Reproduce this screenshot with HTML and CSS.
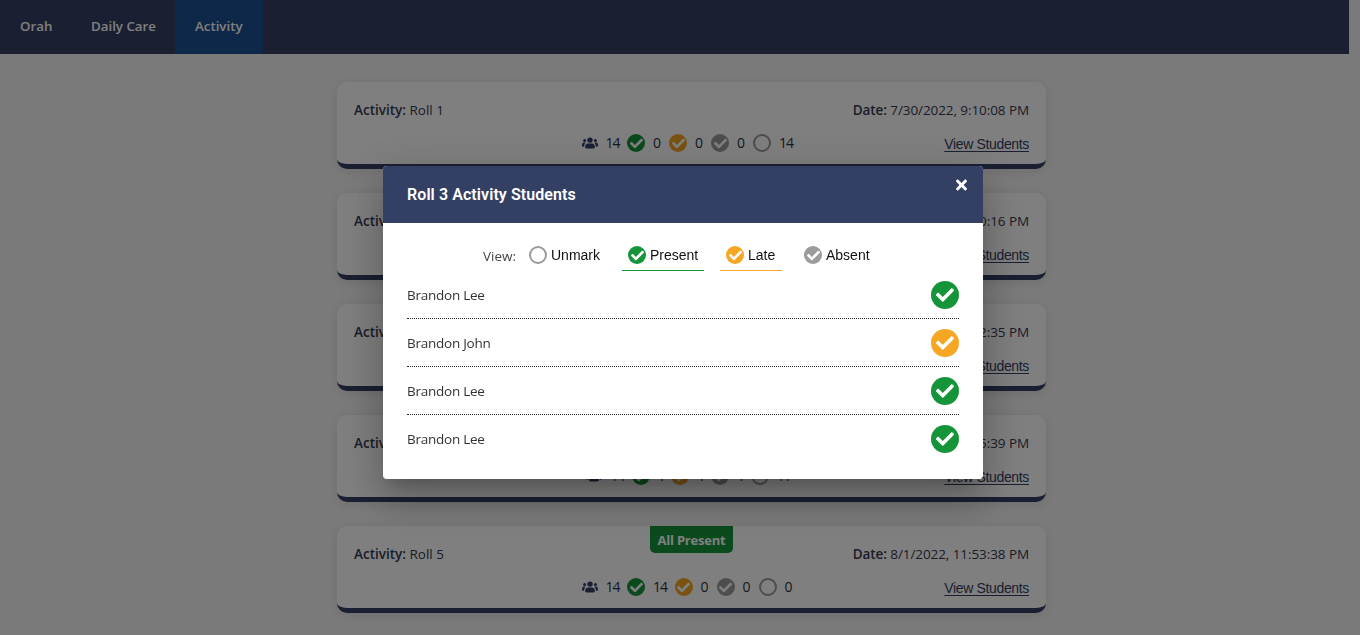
FILE: index.html
```
<!DOCTYPE html>
<html lang="en">
<head>
<meta charset="utf-8">
<title>Activity</title>
<link rel="stylesheet" href="styles.css">
</head>
<body>
<svg class="defs" aria-hidden="true">
  <symbol id="check" viewBox="0 0 512 512"><path d="M173.898 439.404l-166.4-166.4c-9.997-9.997-9.997-26.206 0-36.204l36.203-36.204c9.997-9.998 26.207-9.998 36.204 0L192 312.69 432.095 72.596c9.997-9.997 26.207-9.997 36.204 0l36.203 36.204c9.997 9.997 9.997 26.206 0 36.204l-294.4 294.401c-9.998 9.997-26.207 9.997-36.204-.001z"/></symbol>
  <symbol id="users" viewBox="0 0 16 12"><circle cx="8" cy="3.1" r="2.7"/><circle cx="2.6" cy="3.6" r="1.5"/><circle cx="13.4" cy="3.6" r="1.5"/><path d="M5.6 6.5h4.8c1.6.4 2.5 1.700 2.500 3.300 0 1-.6 1.600-1.500 1.600H4.600c-.9 0-1.500-.6-1.500-1.600 0-1.600.9-2.900 2.500-3.300z"/><path d="M1.500 5.600h2.300C2.700 6.500 2.200 7.800 2.100 9.700H1C.3 9.700 0 9.200 0 8.500c0-1.500.4-2.500 1.500-2.900zM14.500 5.600h-2.300c1.100.9 1.600 2.200 1.700 4.100H15c.7 0 1-.5 1-1.200 0-1.500-.4-2.500-1.500-2.900z"/></symbol>
  <symbol id="times" viewBox="0 0 352 512"><path d="M242.72 256l100.07-100.07c12.28-12.28 12.28-32.19 0-44.48l-22.24-22.24c-12.28-12.28-32.19-12.28-44.48 0L176 189.28 75.93 89.21c-12.28-12.28-32.19-12.28-44.48 0L9.21 111.45c-12.28 12.28-12.28 32.19 0 44.48L109.28 256 9.21 356.07c-12.28 12.28-12.28 32.19 0 44.48l22.24 22.24c12.28 12.28 32.2 12.28 44.48 0L176 322.72l100.07 100.07c12.28 12.28 32.2 12.28 44.48 0l22.24-22.24c12.28-12.28 12.28-32.19 0-44.48L242.72 256z"/></symbol>
</svg>

<nav class="nav">
  <a class="nav-link orah">Orah</a>
  <a class="nav-link care">Daily Care</a>
  <a class="nav-link active">Activity</a>
</nav>

<main class="list">
  <article class="card">
    <div class="row"><span class="activity"><b>Activity:</b> Roll 1</span><span class="date"><b>Date:</b> 7/30/2022, 9:10:08 PM</span></div>
    <div class="stats">
      <svg class="users"><use href="#users"/></svg><span class="n two">14</span>
      <i class="dot green"><svg><use href="#check"/></svg></i><span class="n">0</span>
      <i class="dot orange"><svg><use href="#check"/></svg></i><span class="n">0</span>
      <i class="dot grey"><svg><use href="#check"/></svg></i><span class="n">0</span>
      <i class="dot empty"></i><span class="n two">14</span>
    </div>
    <a class="view">View Students</a>
  </article>
  <article class="card">
    <div class="row"><span class="activity"><b>Activity:</b> Roll 2</span><span class="date"><b>Date:</b> 7/30/2022, 9:10:16 PM</span></div>
    <a class="view">View Students</a>
  </article>
  <article class="card">
    <div class="row"><span class="activity"><b>Activity:</b> Roll 3</span><span class="date"><b>Date:</b> 7/31/2022, 9:12:35 PM</span></div>
    <a class="view">View Students</a>
  </article>
  <article class="card">
    <div class="row"><span class="activity"><b>Activity:</b> Roll 4</span><span class="date"><b>Date:</b> 7/31/2022, 9:15:39 PM</span></div>
    <div class="stats">
      <svg class="users"><use href="#users"/></svg><span class="n two">14</span>
      <i class="dot green"><svg><use href="#check"/></svg></i><span class="n one">1</span>
      <i class="dot orange"><svg><use href="#check"/></svg></i><span class="n one">1</span>
      <i class="dot grey"><svg><use href="#check"/></svg></i><span class="n one">1</span>
      <i class="dot empty"></i><span class="n eleven">11</span>
    </div>
    <a class="view">View Students</a>
  </article>
  <article class="card">
    <span class="badge">All Present</span>
    <div class="row"><span class="activity"><b>Activity:</b> Roll 5</span><span class="date"><b>Date:</b> 8/1/2022, 11:53:38 PM</span></div>
    <div class="stats">
      <svg class="users"><use href="#users"/></svg><span class="n two">14</span>
      <i class="dot green"><svg><use href="#check"/></svg></i><span class="n two">14</span>
      <i class="dot orange"><svg><use href="#check"/></svg></i><span class="n">0</span>
      <i class="dot grey"><svg><use href="#check"/></svg></i><span class="n">0</span>
      <i class="dot empty"></i><span class="n">0</span>
    </div>
    <a class="view">View Students</a>
  </article>
</main>

<div class="backdrop">
  <section class="dialog" role="dialog">
    <header class="dialog-head">
      <h2>Roll 3 Activity Students</h2>
      <svg class="close"><use href="#times"/></svg>
    </header>
    <div class="filters">
      <span class="label">View:</span>
      <span class="filter unmark"><i class="dot empty"></i><span>Unmark</span></span>
      <span class="filter present"><i class="dot green"><svg><use href="#check"/></svg></i><span>Present</span></span>
      <span class="filter late"><i class="dot orange"><svg><use href="#check"/></svg></i><span>Late</span></span>
      <span class="filter absent"><i class="dot grey"><svg><use href="#check"/></svg></i><span>Absent</span></span>
    </div>
    <ul class="students">
      <li><span>Brandon Lee</span><i class="dot big green"><svg><use href="#check"/></svg></i></li>
      <li><span>Brandon John</span><i class="dot big orange"><svg><use href="#check"/></svg></i></li>
      <li><span>Brandon Lee</span><i class="dot big green"><svg><use href="#check"/></svg></i></li>
      <li><span>Brandon Lee</span><i class="dot big green"><svg><use href="#check"/></svg></i></li>
    </ul>
  </section>
</div>
</body>
</html>
```
FILE: styles.css
```
* { box-sizing: border-box; }

body {
  margin: 0;
  height: 635px;
  overflow: hidden;
  background: #f5f5f5;
  color: #343f64;
  font: 14px/20px "Open Sans", "Noto Sans", sans-serif;
}

.defs { display: none; }
svg { display: block; fill: currentColor; }

.nav {
  display: flex;
  width: 1349px;
  height: 54px;
  background: #343f64;
  color: #fff;
  font-size: 13.3px;
  font-weight: 600;
}
.nav-link {
  display: flex;
  align-items: center;
  padding: 0 0 2px 20px;
  white-space: nowrap;
}
.orah { width: 71px; }
.care { width: 104px; }
.active { width: 88px; background: #1b5090; }

.list {
  display: flex;
  flex-direction: column;
  gap: 24px;
  width: 709px;
  margin: 28px 0 0 337px;
}
.card {
  position: relative;
  flex: none;
  height: 87px;
  padding: 18px 17px 0;
  border-bottom: 5px solid #343f64;
  border-radius: 10px;
  background: #fff;
  box-shadow: 0 2px 12px rgba(0, 0, 0, .1);
}
.row { display: flex; justify-content: space-between; white-space: nowrap; }
.activity, .date { color: #343b50; font-size: 13.5px; font-weight: 400; }
.row b { font-weight: 600; }
.date { letter-spacing: -.08px; }

.stats {
  display: flex;
  align-items: center;
  justify-content: center;
  gap: 8px;
  height: 18px;
  margin: 14px 9px 0 0;
}
.users { width: 16px; height: 12px; }
.n { width: 8px; color: #2a3044; font-weight: 500; white-space: nowrap; }
.two { width: 13.5px; letter-spacing: -1px; }
.one { width: 5.7px; }
.eleven { width: 11px; letter-spacing: -1.5px; }

.view {
  position: absolute;
  right: 17px;
  bottom: 10px;
  font: 14px/20px "Liberation Sans", Arial, sans-serif;
  letter-spacing: -.35px;
  text-decoration: underline;
  text-underline-offset: 2px;
}

.badge {
  position: absolute;
  top: 0;
  left: 313px;
  width: 83px;
  height: 27px;
  border-radius: 0 0 5px 5px;
  background: #159439;
  color: #fff;
  font-size: 13px;
  font-weight: 700;
  letter-spacing: -.2px;
  line-height: 28px;
  text-align: center;
}

.dot {
  display: flex;
  flex: none;
  align-items: center;
  justify-content: center;
  width: 18px;
  height: 18px;
  border-radius: 50%;
  color: #fff;
}
.dot svg { width: 13px; height: 13px; }
.green { background: #159439; }
.orange { background: #f5a623; }
.grey { background: #9b9b9b; }
.empty { border: 2px solid #9b9b9b; }
.big { width: 28px; height: 28px; }
.big svg { width: 18px; height: 18px; }

.backdrop {
  position: fixed;
  inset: 0;
  display: flex;
  justify-content: center;
  align-items: flex-start;
  padding: 166px 0 0 6px;
  background: rgba(0, 0, 0, .5);
}
.dialog {
  width: 600px;
  height: 313px;
  overflow: hidden;
  border-radius: 4px;
  background: #fff;
  color: #222;
  box-shadow: 0 11px 15px -7px rgba(0, 0, 0, .2), 0 24px 38px 3px rgba(0, 0, 0, .14), 0 9px 46px 8px rgba(0, 0, 0, .12);
}
.dialog-head {
  display: flex;
  justify-content: space-between;
  height: 57px;
  padding: 0 16px 0 24px;
  background: #343f64;
  color: #fff;
}
.dialog-head h2 {
  margin: 0;
  font: 600 16px/57px Roboto, sans-serif;
  letter-spacing: .08px;
}
.close { width: 11px; height: 16px; margin-top: 11px; }

.filters {
  display: flex;
  gap: 16px;
  height: 48px;
  padding: 16px 0 0 100px;
}
.label { width: 24px; color: #444; line-height: 34px; font-size: 13.5px; white-space: nowrap; }
.filter {
  display: flex;
  gap: 4px;
  height: 32px;
  padding: 7px 6px 0;
  border-bottom: 1px solid transparent;
  color: #111;
  font: 14px/18px "Liberation Sans", Arial, sans-serif;
  white-space: nowrap;
}
.unmark { width: 83px; }
.present { width: 82px; border-color: #159439; }
.late { width: 62px; border-color: #f5a623; }

.students { margin: 0; padding: 0 24px; list-style: none; }
.students li {
  display: flex;
  align-items: center;
  justify-content: space-between;
  height: 48px;
  border-bottom: 1px dotted #222;
  color: #333;
  font-size: 13.5px;
  letter-spacing: -.25px;
}
.students li:last-child { border-bottom: 0; }
```
